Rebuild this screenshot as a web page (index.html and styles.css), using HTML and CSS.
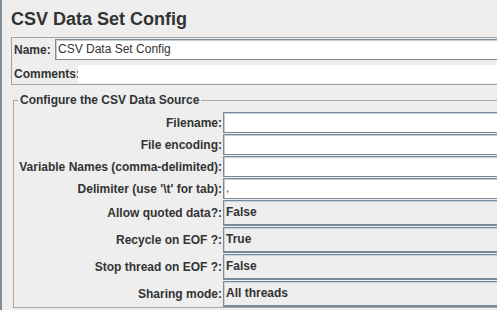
FILE: index.html
```html
<!DOCTYPE html>
<html>
<head>
    <title>CSV Data Set Config</title>
    <link rel="stylesheet" href="styles.css">
</head>
<body>
    <div class="page">
        <h1 class="title">CSV Data Set Config</h1>

        <div class="name_panel">
            <div class="name_row">
                <label class="lbl">Name:</label>
                <div class="field">CSV Data Set Config</div>
            </div>
            <div class="comments_row">
                <label class="lbl">Comments:</label>
                <div class="comments"></div>
            </div>
        </div>

        <fieldset class="source">
            <legend>Configure the CSV Data Source</legend>
            <div class="grid">
                <label class="lbl right">Filename:</label>
                <div class="field"></div>

                <label class="lbl right">File encoding:</label>
                <div class="field"></div>

                <label class="lbl right">Variable Names (comma-delimited):</label>
                <div class="field"></div>

                <label class="lbl right">Delimiter (use '\t' for tab):</label>
                <div class="field"><span class="delim">,</span></div>

                <label class="lbl right">Allow quoted data?:</label>
                <div class="combo">False</div>

                <label class="lbl right">Recycle on EOF ?:</label>
                <div class="combo">True</div>

                <label class="lbl right">Stop thread on EOF ?:</label>
                <div class="combo">False</div>

                <label class="lbl right">Sharing mode:</label>
                <div class="combo">All threads</div>
            </div>
        </fieldset>
    </div>
</body>
</html>
```

FILE: styles.css
```css
body {
    margin: 0;
    padding: 0;
    background-color: #eeeeee;
    font-family: "Liberation Sans", Arial, sans-serif;
    font-size: 12px;
    color: #333333;
    overflow: hidden;
}

.page {
    border-left: 2px solid #7d8d9c;
    height: 310px;
}

.title {
    margin: 0;
    padding: 8px 0 0 9px;
    font-size: 18px;
    line-height: 22px;
    font-weight: bold;
}

/* панель имени */
.name_panel {
    margin: 7px 0 0 9px;
    border: 1px solid #a3a3a3;
    border-right: none;
    padding: 1px 0 0 2px;
    height: 45px;
}

.name_row,
.comments_row {
    display: flex;
    align-items: center;
}

.name_row .lbl {
    width: 41px;
}

.comments_row {
    margin-top: 5px;
}

.comments_row .lbl {
    width: 64px;
}

.comments {
    flex: 1;
    height: 18px;
    background-color: #fff;
}

.lbl {
    font-weight: bold;
    white-space: nowrap;
}

.right {
    text-align: right;
}

.field {
    flex: 1;
    height: 19px;
    line-height: 19px;
    background-color: #fff;
    border: 1px solid #7a8a99;
    border-right: none;
    box-shadow: inset 1px 1px 0 #c4ccd4;
    padding-left: 2px;
}

.delim {
    color: #a03030;
}

/* блок настроек */
.source {
    margin: 8px 0 0 11px;
    padding: 5px 0 0 0;
    border: 1px solid #a8a8a8;
    border-right: none;
    height: 208px;
    min-width: 0;
}

.source legend {
    margin-left: 4px;
    padding: 0 2px;
    font-weight: bold;
    line-height: 14px;
}

.grid {
    display: grid;
    grid-template-columns: 208px 1fr;
    column-gap: 1px;
    row-gap: 1px;
    grid-template-rows: 21px 21px 21px 21px 26px 26px 26px 26px;
    align-items: center;
}

.combo {
    height: 23px;
    line-height: 23px;
    background-color: #eeeeee;
    border: 1px solid #7a8a99;
    border-right: none;
    border-bottom-width: 2px;
    box-shadow: inset 1px 1px 0 #c8d4e0;
    padding-left: 2px;
    font-weight: bold;
}
```
